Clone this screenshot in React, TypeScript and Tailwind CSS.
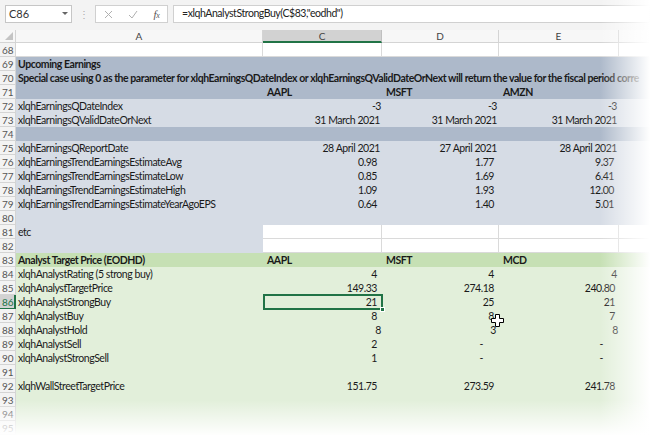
import React from "react";

type Cell = { t: string; r?: string; b?: boolean };
type Row = {
  n: number;
  kind: "white" | "dark" | "light" | "lightA" | "green" | "greenHead";
  a?: string;
  bold?: boolean;
  span?: string;
  c?: Cell;
  d?: Cell;
  e?: Cell;
};

const num = (t: string, r = "pr-[5px]"): Cell => ({ t, r });

const rows: Row[] = [
  { n: 68, kind: "white" },
  { n: 69, kind: "dark", a: "Upcoming Earnings", bold: true },
  {
    n: 70,
    kind: "dark",
    bold: true,
    span: "Special case using 0 as the parameter for xlqhEarningsQDateIndex or xlqhEarningsQValidDateOrNext will return the value for the fiscal period corre",
  },
  { n: 71, kind: "dark", c: { t: "AAPL", b: true }, d: { t: "MSFT", b: true }, e: { t: "AMZN", b: true } },
  { n: 72, kind: "light", a: "xlqhEarningsQDateIndex", c: num("-3", "pr-[1px]"), d: num("-3", "pr-[2px]"), e: num("-3", "pr-[2px]") },
  {
    n: 73,
    kind: "light",
    a: "xlqhEarningsQValidDateOrNext",
    c: num("31 March 2021", "pr-[2px]"),
    d: num("31 March 2021", "pr-[2px]"),
    e: num("31 March 2021", "pr-[2px]"),
  },
  { n: 74, kind: "dark" },
  {
    n: 75,
    kind: "light",
    a: "xlqhEarningsQReportDate",
    c: num("28 April 2021", "pr-[2px]"),
    d: num("27 April 2021", "pr-[2px]"),
    e: num("28 April 2021", "pr-[2px]"),
  },
  { n: 76, kind: "light", a: "xlqhEarningsTrendEarningsEstimateAvg", c: num("0.98"), d: num("1.77"), e: num("9.37") },
  { n: 77, kind: "light", a: "xlqhEarningsTrendEarningsEstimateLow", c: num("0.85"), d: num("1.69"), e: num("6.41") },
  { n: 78, kind: "light", a: "xlqhEarningsTrendEarningsEstimateHigh", c: num("1.09"), d: num("1.93"), e: num("12.00") },
  { n: 79, kind: "light", a: "xlqhEarningsTrendEarningsEstimateYearAgoEPS", c: num("0.64"), d: num("1.40"), e: num("5.01") },
  { n: 80, kind: "light" },
  { n: 81, kind: "lightA", a: "etc" },
  { n: 82, kind: "lightA" },
  {
    n: 83,
    kind: "greenHead",
    a: "Analyst Target Price (EODHD)",
    bold: true,
    c: { t: "AAPL", b: true },
    d: { t: "MSFT", b: true },
    e: { t: "MCD", b: true },
  },
  { n: 84, kind: "green", a: "xlqhAnalystRating (5 strong buy)", c: num("4"), d: num("4"), e: num("4", "pr-[2px]") },
  { n: 85, kind: "green", a: "xlqhAnalystTargetPrice", c: num("149.33"), d: num("274.18"), e: num("240.80", "pr-[4px]") },
  { n: 86, kind: "green", a: "xlqhAnalystStrongBuy", c: num("21"), d: num("25"), e: num("21", "pr-[4px]") },
  { n: 87, kind: "green", a: "xlqhAnalystBuy", c: num("8"), d: num("8"), e: num("7", "pr-[4px]") },
  { n: 88, kind: "green", a: "xlqhAnalystHold", c: num("8", "pr-[1px]"), d: num("3", "pr-[3px]"), e: num("8", "pr-[1px]") },
  { n: 89, kind: "green", a: "xlqhAnalystSell", c: num("2"), d: num("-", "pr-[16px]"), e: num("-", "pr-[16px]") },
  { n: 90, kind: "green", a: "xlqhAnalystStrongSell", c: num("1"), d: num("-", "pr-[16px]"), e: num("-", "pr-[16px]") },
  { n: 91, kind: "green" },
  { n: 92, kind: "green", a: "xlqhWallStreetTargetPrice", c: num("151.75"), d: num("273.59"), e: num("241.78", "pr-[4px]") },
  { n: 93, kind: "green" },
  { n: 94, kind: "green" },
  { n: 95, kind: "green" },
];

const bgFor = (kind: Row["kind"]) => {
  if (kind === "dark") return "bg-[#adb9ca]";
  if (kind === "light" || kind === "lightA") return "bg-[#d6dce5]";
  if (kind === "greenHead") return "bg-[#c6e0b4]";
  if (kind === "green") return "bg-[#e2efda]";
  return "bg-white";
};

function ValueCell({ cell, w, grid, sel }: { cell?: Cell; w: string; grid: boolean; sel?: boolean }) {
  const align = cell && !cell.b ? "text-right" : "text-left pl-[4px]";
  return (
    <div
      className={`${w} relative h-full shrink-0 whitespace-nowrap ${align} ${cell?.r ?? ""} ${cell?.b ? "font-bold" : ""} ${
        grid ? "border-r border-b border-[#dadada]" : ""
      }`}
    >
      {cell?.t}
      {sel && (
        <>
          <div className="absolute left-0 top-[-1px] right-[-1px] bottom-[-1px] border-2 border-[#217346]" />
          <div className="absolute right-[-3px] bottom-[-3px] w-[5px] h-[5px] bg-[#217346] border border-white" />
        </>
      )}
    </div>
  );
}

function SheetRow({ row }: { row: Row }) {
  const selected = row.n === 86;
  const bg = bgFor(row.kind);
  const restWhite = row.kind === "white" || row.kind === "lightA";
  return (
    <div className="flex h-[14px] leading-[14px]">
      <div
        className={`w-[16px] shrink-0 pl-[2px] text-[10px] tracking-normal border-b border-r ${
          selected ? "bg-[#d2d2d2] text-[#217346] border-r-2 border-r-[#217346]" : "bg-[#f3f3f3] text-[#555] border-[#d4d4d4]"
        }`}
      >
        {row.n}
      </div>
      {row.span ? (
        <div className={`flex-1 min-w-0 ${bg} pl-[2px] whitespace-nowrap overflow-hidden font-bold`}>{row.span}</div>
      ) : (
        <>
          <div
            className={`w-[247px] shrink-0 pl-[2px] whitespace-nowrap ${bg} ${row.bold ? "font-bold" : ""} ${
              row.kind === "white" ? "border-r border-b border-[#dadada]" : ""
            }`}
          >
            {row.a}
          </div>
          <div className={`flex flex-1 ${restWhite ? "bg-white" : bg}`}>
            <ValueCell cell={row.c} w="w-[119px]" grid={restWhite} sel={selected} />
            <ValueCell cell={row.d} w="w-[117px]" grid={restWhite} />
            <ValueCell cell={row.e} w="w-[120px]" grid={restWhite} />
            <div className={`flex-1 ${restWhite ? "border-b border-[#dadada]" : ""}`} />
          </div>
        </>
      )}
    </div>
  );
}

export default function App() {
  return (
    <div
      className="relative w-[650px] h-[436px] overflow-hidden bg-white text-[10.5px] tracking-[-0.45px] text-[#1a1a1a]"
      style={{ fontFamily: "Lato, 'Liberation Sans', sans-serif" }}
    >
      {/* formula bar */}
      <div className="flex items-center h-[30px] bg-[#f3f3f3] pl-[5px] pb-[2px]">
        <div className="flex items-center justify-between w-[67px] h-[18px] bg-white border border-[#c6c6c6] pl-[3px] pr-[3px] text-[11px] tracking-normal text-[#333]">
          <span>C86</span>
          <svg width="6" height="4" viewBox="0 0 6 4">
            <path d="M0 0 L6 0 L3 3 Z" fill="#666" />
          </svg>
        </div>
        <div className="w-[23px] flex justify-center text-[#aaa] text-[10px]">⋮</div>
        <div className="flex items-center justify-around w-[73px] h-[18px] bg-white border border-[#d0d0d0] text-[#b5b5b5]">
          <svg width="9" height="9" viewBox="0 0 9 9">
            <path d="M1 1 L8 8 M8 1 L1 8" stroke="#b0b0b0" strokeWidth="1" />
          </svg>
          <svg width="10" height="9" viewBox="0 0 10 9">
            <path d="M1 5 L4 8 L9 1" stroke="#b0b0b0" strokeWidth="1" fill="none" />
          </svg>
          <span className="italic text-[#555] text-[11px]" style={{ fontFamily: "'Liberation Serif', serif" }}>
            f<span className="text-[8px]">x</span>
          </span>
        </div>
        <div className="flex items-center flex-1 h-[18px] ml-[5px] bg-white border border-[#d0d0d0] pl-[8px] text-[10.5px] text-[#222]">
          =xlqhAnalystStrongBuy(C$83,"eodhd")
        </div>
      </div>

      {/* column headers */}
      <div className="flex h-[13px] leading-[13px] bg-[#f7f7f7] text-[10px] tracking-normal text-[#444]">
        <div className="relative w-[16px] shrink-0 border-r border-b border-[#d4d4d4]">
          <svg className="absolute right-[2px] bottom-[2px]" width="8" height="8" viewBox="0 0 8 8">
            <path d="M8 0 L8 8 L0 8 Z" fill="#c4c4c4" />
          </svg>
        </div>
        <div className="w-[247px] shrink-0 text-center border-r border-b border-[#d4d4d4]">A</div>
        <div className="w-[119px] shrink-0 text-center bg-[#d2d2d2] border-r border-[#c0c0c0] border-b-2 border-b-[#217346]">C</div>
        <div className="w-[117px] shrink-0 text-center border-r border-b border-[#d4d4d4]">D</div>
        <div className="w-[120px] shrink-0 text-center border-r border-b border-[#d4d4d4]">E</div>
        <div className="flex-1 border-b border-[#d4d4d4]" />
      </div>

      {/* rows */}
      <div className="flex flex-col">
        {rows.map((r) => (
          <SheetRow key={r.n} row={r} />
        ))}
      </div>

      {/* mouse cursor */}
      <svg className="absolute left-[491px] top-[314px]" width="13" height="13" viewBox="0 0 13 13">
        <path
          d="M4.5 0.5 H8.5 V4.5 H12.5 V8.5 H8.5 V12.5 H4.5 V8.5 H0.5 V4.5 H4.5 Z"
          fill="white"
          stroke="black"
          strokeWidth="1"
        />
      </svg>

      {/* screenshot fade */}
      <div className="absolute top-0 right-0 bottom-0 w-[50px] bg-gradient-to-r from-transparent to-white" />
      <div className="absolute left-0 right-0 bottom-0 h-[36px] bg-gradient-to-b from-transparent to-white" />
    </div>
  );
}
